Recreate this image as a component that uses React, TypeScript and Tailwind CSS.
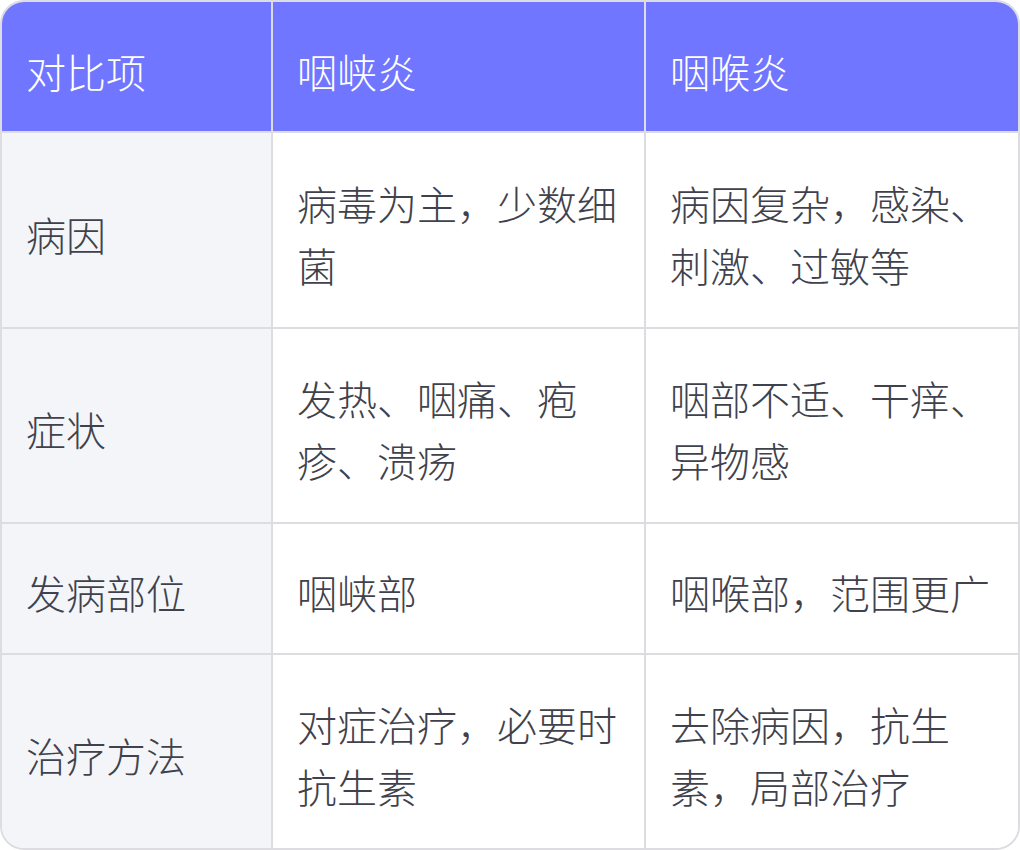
const HEADERS = ['对比项', '咽峡炎', '咽喉炎'];

const ROWS = [
  ['病因', '病毒为主，少数细菌', '病因复杂，感染、刺激、过敏等'],
  ['症状', '发热、咽痛、疱疹、溃疡', '咽部不适、干痒、异物感'],
  ['发病部位', '咽峡部', '咽喉部，范围更广'],
  ['治疗方法', '对症治疗，必要时抗生素', '去除病因，抗生素，局部治疗'],
];

export default function App() {
  return (
    <div
      className="w-[1020px] h-[850px] bg-white border-2 border-[#dcdce1] rounded-[24px] overflow-hidden font-light"
      style={{ fontFamily: '"Noto Sans CJK SC", "Noto Sans", sans-serif' }}
    >
      <div className="grid h-full grid-cols-[271px_373px_1fr] grid-rows-[131px_196px_195px_131px_1fr] text-[40px] leading-[62px]">
        {/* Header */}
        {HEADERS.map((h, i) => (
          <div
            key={h}
            className={`flex items-center pt-[9px] pl-6 pr-6 bg-[#7076ff] text-white border-b-2 border-[#dcdce1] ${
              i < 2 ? 'border-r-2' : ''
            }`}
          >
            {h}
          </div>
        ))}

        {/* Body */}
        {ROWS.map((row, r) =>
          row.map((cell, c) => (
            <div
              key={`${r}-${c}`}
              className={`flex items-center pt-[7px] pl-6 pr-6 text-[#3f424c] border-[#dcdce1] ${
                c === 0 ? 'bg-[#f4f5f9]' : 'bg-white'
              } ${c < 2 ? 'border-r-2' : ''} ${r < ROWS.length - 1 ? 'border-b-2' : ''}`}
            >
              <span>{cell}</span>
            </div>
          ))
        )}
      </div>
    </div>
  );
}
